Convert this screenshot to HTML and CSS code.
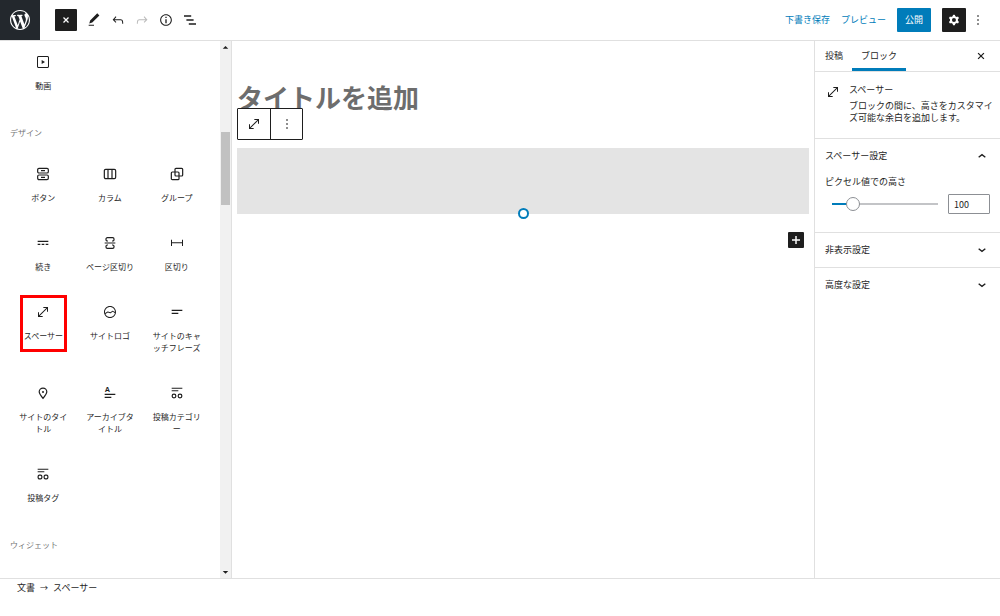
FILE: index.html
```
<!DOCTYPE html>
<html lang="ja">

<head>
    <meta charset="UTF-8">
    <meta name="viewport" content="width=device-width, initial-scale=1.0">
    <title>投稿を編集</title>
    <link rel="stylesheet" href="styles.css">
</head>

<body>
    <header class="topbar">
        <a class="logo" href="#" aria-label="WordPress">
            <svg viewBox="0 0 20 20"><path d="M20 10c0-5.51-4.49-10-10-10C4.48 0 0 4.49 0 10c0 5.52 4.48 10 10 10 5.51 0 10-4.48 10-10zM7.78 15.37L4.37 6.22c.55-.02 1.17-.08 1.17-.08.5-.06.44-1.13-.06-1.11 0 0-1.45.11-2.37.11-.18 0-.37 0-.58-.01C4.12 2.69 6.87 1.11 10 1.11c2.33 0 4.45.87 6.05 2.34-.68-.11-1.65.39-1.65 1.58 0 .74.45 1.36.9 2.1.35.61.55 1.36.55 2.46 0 1.49-1.4 5-1.4 5l-3.03-8.37c.54-.02.82-.17.82-.17.5-.05.44-1.25-.06-1.22 0 0-1.44.12-2.38.12-.87 0-2.33-.12-2.33-.12-.5-.03-.56 1.2-.06 1.22l.92.08 1.26 3.41zM17.41 10c.24-.64.74-1.87.43-4.25.7 1.29 1.05 2.71 1.05 4.25 0 3.29-1.73 6.24-4.4 7.78.97-2.59 1.94-5.2 2.92-7.78zM6.1 18.09C3.12 16.65 1.11 13.53 1.11 10c0-1.3.23-2.48.72-3.59C3.25 10.3 4.67 14.2 6.1 18.09zm4.03-6.63l2.58 6.98c-.86.29-1.76.45-2.71.45-.79 0-1.57-.11-2.29-.33.81-2.38 1.62-4.74 2.42-7.1z"/></svg>
        </a>
        <div class="tools">
            <button class="dark toggle" aria-label="閉じる"><svg class="small" viewBox="0 0 24 24"><path class="line thick" d="M6 6l12 12M18 6L6 18"/></svg></button>
            <button aria-label="編集"><svg viewBox="0 0 24 24"><path d="M20.1 5.1L16.9 2 6.2 12.7l-1.3 4.4 4.5-1.3L20.1 5.1zM4 20.8h8v-1.5H4v1.5z"/></svg></button>
            <button aria-label="元に戻す"><svg viewBox="0 0 24 24"><path d="M18.3 11.7c-.6-.6-1.4-.9-2.3-.9H6.7l2.9-3.3-1.1-1-4.5 5L8.5 16l1-1-2.7-2.7H16c.5 0 .9.2 1.3.5 1 1 1 3.4 1 4.5v.3h1.5v-.2c0-1.5 0-4.3-1.5-5.7z"/></svg></button>
            <button aria-label="やり直す" disabled><svg viewBox="0 0 24 24"><path d="M15.6 6.5l-1.1 1 2.9 3.3H8c-.9 0-1.7.3-2.3.9-1.4 1.5-1.4 4.2-1.4 5.6v.2h1.5v-.3c0-1.1 0-3.5 1-4.5.3-.3.7-.5 1.3-.5h9.2L14.5 15l1.1 1.1 4.6-4.6-4.6-5z"/></svg></button>
            <button aria-label="詳細"><svg viewBox="0 0 24 24"><path d="M12 3.2c-4.8 0-8.8 3.9-8.8 8.8 0 4.8 3.9 8.8 8.8 8.8 4.8 0 8.8-3.9 8.8-8.8 0-4.8-4-8.8-8.8-8.8zm0 16c-4 0-7.2-3.3-7.2-7.2C4.8 8 8 4.8 12 4.8s7.2 3.3 7.2 7.2c0 4-3.2 7.2-7.2 7.2zM11 17h2v-6h-2v6zm0-8h2V7h-2v2z"/></svg></button>
            <button aria-label="リスト表示"><svg viewBox="0 0 24 24"><path d="M13.8 5H3v2h10.800V5zm-3.600 12v2H21v-2H10.200zm7.200-6H6.600v2h10.800v-2z"/></svg></button>
        </div>
        <div class="actions">
            <button class="link">下書き保存</button>
            <button class="link">プレビュー</button>
            <button class="publish">公開</button>
            <button class="dark" aria-label="設定"><svg viewBox="0 0 24 24"><path fill-rule="evenodd" d="M10.289 4.836A1 1 0 0111.275 4h1.306a1 1 0 01.987.836l.244 1.466c.787.26 1.503.679 2.108 1.218l1.393-.522a1 1 0 011.216.437l.653 1.13a1 1 0 01-.23 1.273l-1.148.944a6.025 6.025 0 010 2.435l1.149.946a1 1 0 01.23 1.272l-.653 1.13a1 1 0 01-1.216.437l-1.394-.522c-.605.54-1.32.958-2.108 1.218l-.244 1.466a1 1 0 01-.987.836h-1.306a1 1 0 01-.986-.836l-.244-1.466a5.995 5.995 0 01-2.108-1.218l-1.394.522a1 1 0 01-1.217-.436l-.653-1.131a1 1 0 01.23-1.272l1.149-.946a6.026 6.026 0 010-2.435l-1.148-.944a1 1 0 01-.23-1.272l.653-1.131a1 1 0 011.217-.437l1.393.522a5.994 5.994 0 012.108-1.218l.244-1.466zM14.929 12a3 3 0 11-6 0 3 3 0 016 0z"/></svg></button>
            <button class="more" aria-label="オプション"><svg viewBox="0 0 24 24"><path d="M13 19h-2v-2h2v2zm0-6h-2v-2h2v2zm0-6h-2V5h2v2z"/></svg></button>
        </div>
    </header>

    <div class="editor">
        <aside class="inserter">
            <div class="blocks">
                <div class="grid first">
                    <button class="item"><svg viewBox="0 0 24 24"><path d="M18.7 3H5.3C4 3 3 4 3 5.3v13.4C3 20 4 21 5.3 21h13.4c1.3 0 2.3-1 2.3-2.3V5.3C21 4 20 3 18.7 3zm.8 15.7c0 .4-.4.8-.8.8H5.3c-.4 0-.8-.4-.8-.8V5.3c0-.4.4-.8.8-.8h13.4c.4 0 .8.4.8.8v13.4zM10 15l5-3-5-3v6z"/></svg>動画</button>
                </div>
                <h2>デザイン</h2>
                <div class="grid">
                    <button class="item"><svg viewBox="0 0 24 24"><rect class="line" x="4" y="3.500" width="16" height="7" rx="2"/><rect class="line" x="4" y="13.500" width="16" height="7" rx="2"/><path class="line" d="M9 7h6M9 17h6"/></svg>ボタン</button>
                    <button class="item"><svg viewBox="0 0 24 24"><rect class="line" x="3.500" y="5" width="17" height="14" rx="2"/><path class="line" d="M9 5v14M15 5v14"/></svg>カラム</button>
                    <button class="item"><svg viewBox="0 0 24 24"><rect class="line" x="9" y="3.500" width="11.500" height="11.500" rx="1.500"/><rect class="line" x="3.500" y="9" width="11.500" height="11.500" rx="1.500"/></svg>グループ</button>
                    <button class="item"><svg viewBox="0 0 24 24"><path d="M4 8.500v2h16v-2H4zm12 6.500h4v-2h-4v2zm-6 0h4v-2h-4v2zm-6 0h4v-2H4v2z"/></svg>続き</button>
                    <button class="item"><svg viewBox="0 0 24 24"><path class="line" d="M9 9H8a2 2 0 0 1-2-2V6a2 2 0 0 1 2-2h8a2 2 0 0 1 2 2v1a2 2 0 0 1-2 2h-1M4 12h16M9 15H8a2 2 0 0 0-2 2v1a2 2 0 0 0 2 2h8a2 2 0 0 0 2-2v-1a2 2 0 0 0-2-2h-1"/></svg>ページ区切り</button>
                    <button class="item"><svg viewBox="0 0 24 24"><path d="M4.500 12.500v4H3V7h1.500v3.987h15V7H21v9.500h-1.500v-4h-15z"/></svg>区切り</button>
                    <button class="item marked"><svg viewBox="0 0 24 24"><path d="M7 18h4.500v1.500h-7v-7H6V17L17 6h-4.500V4.500h7v7H18V7L7 18z"/></svg>スペーサー</button>
                    <button class="item"><svg viewBox="0 0 24 24"><path d="M12 3c-5 0-9 4-9 9s4 9 9 9 9-4 9-9-4-9-9-9zm0 1.500c4.100 0 7.500 3.400 7.500 7.500v.1c-1.400-.8-3.300-1.700-3.400-1.800-.2-.1-.5-.1-.8.1l-2.900 2.100L9 11.300c-.2-.1-.4 0-.6.1l-3.700 2.200c-.1-.5-.2-1-.2-1.500 0-4.200 3.400-7.600 7.500-7.600zm0 15c-3.100 0-5.700-1.900-6.900-4.500l3.700-2.200 3.500 1.200c.2.1.5 0 .7-.1l2.900-2.100c.8.4 2.500 1.200 3.500 1.900-.9 3.300-3.900 5.800-7.400 5.800z"/></svg>サイトロゴ</button>
                    <button class="item"><svg viewBox="0 0 24 24"><path d="M4 10.500h16V8.500H4v2zM4 15h10v-2H4v2z"/></svg>サイトのキャッチフレーズ</button>
                    <button class="item"><svg viewBox="0 0 24 24"><path class="line" d="M12 20c-1.500-1.800-5.700-6.800-5.700-9.800a5.700 5.500 0 0 1 11.400 0c0 3-4.200 8-5.700 9.800z"/><circle cx="12" cy="10.500" r="1.500"/></svg>サイトのタイトル</button>
                    <button class="item"><svg viewBox="0 0 24 24"><text class="letter" x="4" y="11">A</text><path d="M4 13h16v2H4zM4 17.500h10v2H4z"/></svg>アーカイブタイトル</button>
                    <button class="item"><svg viewBox="0 0 24 24"><path d="M4 4h16v1.500H4zM4 8h10v1.500H4z"/><circle class="line" cx="7.500" cy="16.500" r="2.800"/><circle class="line" cx="16.500" cy="16.500" r="2.800"/></svg>投稿カテゴリー</button>
                    <button class="item"><svg viewBox="0 0 24 24"><path d="M4 4h16v1.500H4zM4 8h10v1.500H4z"/><rect class="line" x="4.700" y="13.700" width="5.600" height="5.600" rx="2"/><rect class="line" x="13.700" y="13.700" width="5.600" height="5.600" rx="2"/></svg>投稿タグ</button>
                </div>
                <h2>ウィジェット</h2>
            </div>
            <div class="scrollbar">
                <svg viewBox="0 0 12 12"><path d="M3 8l3-3 3 3z"/></svg>
                <div class="thumb"></div>
                <svg viewBox="0 0 12 12"><path d="M3 5l3 3 3-3z"/></svg>
            </div>
        </aside>

        <main class="canvas">
            <h1>タイトルを追加</h1>
            <div class="spacer">
                <div class="block-tools">
                    <button aria-label="スペーサー"><svg viewBox="0 0 24 24"><path d="M7 18h4.500v1.500h-7v-7H6V17L17 6h-4.500V4.500h7v7H18V7L7 18z"/></svg></button>
                    <button aria-label="オプション"><svg viewBox="0 0 24 24"><path d="M13 19h-2v-2h2v2zm0-6h-2v-2h2v2zm0-6h-2V5h2v2z"/></svg></button>
                </div>
                <span class="handle"></span>
            </div>
            <button class="dark add" aria-label="ブロックを追加"><svg viewBox="0 0 24 24"><path class="line thick" d="M12 6v12M6 12h12"/></svg></button>
        </main>

        <aside class="settings">
            <div class="tabs">
                <button>投稿</button>
                <button class="active">ブロック</button>
                <button class="close" aria-label="設定を閉じる"><svg class="small" viewBox="0 0 24 24"><path class="line thick" d="M5 5l14 14M19 5L5 19"/></svg></button>
            </div>
            <section class="card">
                <svg viewBox="0 0 24 24"><path d="M7 18h4.500v1.500h-7v-7H6V17L17 6h-4.500V4.500h7v7H18V7L7 18z"/></svg>
                <div>
                    <h2>スペーサー</h2>
                    <p>ブロックの間に、高さをカスタマイズ可能な余白を追加します。</p>
                </div>
            </section>
            <section class="panel">
                <button class="panel-title">スペーサー設定<svg viewBox="0 0 24 24"><path class="line chevron" d="M7 14l5-4 5 4"/></svg></button>
                <div class="control">
                    <label for="height">ピクセル値での高さ</label>
                    <div class="range">
                        <input type="range" id="height" min="30" max="500" value="100">
                        <input type="text" id="heightNum" value="100" aria-label="ピクセル値での高さ">
                    </div>
                </div>
            </section>
            <section class="panel">
                <button class="panel-title">非表示設定<svg viewBox="0 0 24 24"><path class="line chevron" d="M7 10l5 4 5-4"/></svg></button>
            </section>
            <section class="panel">
                <button class="panel-title">高度な設定<svg viewBox="0 0 24 24"><path class="line chevron" d="M7 10l5 4 5-4"/></svg></button>
            </section>
        </aside>
    </div>

    <footer class="breadcrumb">
        <a href="#">文書</a><span class="arrow">→</span><span>スペーサー</span>
    </footer>
</body>

</html>
```
FILE: styles.css
```
*, *::after {
    box-sizing: border-box;
    margin: 0;
    padding: 0;
}
body {
    display: flex;
    flex-direction: column;
    height: 100vh;
    overflow: hidden;
    font-family: "Noto Sans CJK JP", sans-serif;
    font-size: 9px;
    line-height: 12px;
    color: #1e1e1e;
    background: #fff;
}
button, input {
    font: inherit;
    color: inherit;
    border: 0;
    background: none;
}
button {
    display: flex;
    align-items: center;
    justify-content: center;
}
h2 {
    font-size: 9px;
    font-weight: normal;
}
svg {
    flex: none;
    width: 16px;
    height: 16px;
    fill: currentColor;
}
.small {
    width: 10px;
    height: 10px;
}
.line {
    fill: none;
    stroke: currentColor;
    stroke-width: 1.8;
}
.chevron {
    stroke-width: 2;
}
.thick {
    stroke-width: 2.2;
}
.small .thick {
    stroke-width: 3;
}
.letter {
    font: bold 11px "Liberation Sans", sans-serif;
}
.dark {
    color: #fff;
    background: #1e1e1e;
    border-radius: 1px;
}

/* top bar */
.topbar {
    display: flex;
    align-items: center;
    height: 41px;
    border-bottom: 1px solid #e0e0e0;
}
.logo {
    display: flex;
    align-items: center;
    justify-content: center;
    width: 40px;
    height: 40px;
    color: #fff;
    background: #23282d;
}
.logo svg {
    width: 20px;
    height: 20px;
}
.tools {
    display: flex;
    flex: 1;
    margin-left: 15px;
}
.tools button {
    width: 24px;
    height: 22px;
}
.tools .toggle {
    width: 22px;
    margin-right: 5px;
}
.tools button:disabled {
    color: #bbb;
}
.actions {
    display: flex;
    align-items: center;
    gap: 11px;
    padding-right: 10px;
}
.actions .link {
    color: #007cba;
}
.actions .publish {
    height: 24px;
    padding: 0 8px;
    color: #fff;
    background: #007cba;
    border-radius: 1px;
}
.actions .dark, .actions .more {
    width: 24px;
    height: 24px;
}
.actions .more {
    margin-left: -11px;
}

.editor {
    display: flex;
    flex: 1;
    min-height: 0;
}

/* block list */
.inserter {
    display: flex;
    width: 232px;
    border-right: 1px solid #e0e0e0;
}
.blocks {
    flex: 1;
    padding: 0 10px;
    overflow: hidden;
    font-size: 8px;
}
.blocks h2 {
    margin: 19px 0 12px;
    font-size: 8px;
    color: #757575;
}
.grid {
    display: grid;
    grid-template-columns: repeat(3, 1fr);
}
.item {
    position: relative;
    flex-direction: column;
    justify-content: flex-start;
    padding: 15px 9px 16px;
    text-align: center;
}
.first .item {
    padding-top: 13px;
}
.item svg {
    margin-bottom: 10px;
}
.marked::after {
    content: "";
    position: absolute;
    top: 6px;
    left: 10px;
    right: 10px;
    height: 57px;
    border: 3px solid #f00;
}
.scrollbar {
    display: flex;
    flex-direction: column;
    width: 11px;
    background: #f1f1f1;
}
.scrollbar svg {
    width: 11px;
    height: 12px;
}
.scrollbar .thumb {
    height: 73px;
    margin: 79px 1px auto;
    background: #c1c1c1;
}

/* canvas */
.canvas {
    flex: 1;
    padding: 35px 5px 0;
}
.canvas h1 {
    height: 72px;
    font-size: 26px;
    line-height: 42px;
    color: #6d6d6d;
}
.spacer {
    position: relative;
    height: 66px;
    background: #e4e4e4;
}
.block-tools {
    position: absolute;
    top: -40px;
    left: 0;
    display: flex;
    border: 1px solid #1e1e1e;
    border-radius: 1px;
    background: #fff;
}
.block-tools button {
    width: 32px;
    height: 30px;
}
.block-tools button + button {
    border-left: 1px solid #1e1e1e;
}
.handle {
    position: absolute;
    bottom: -5px;
    left: 50%;
    width: 11px;
    height: 11px;
    margin-left: -5px;
    border: 2px solid #007cba;
    border-radius: 50%;
    background: #fff;
}
.add {
    width: 16px;
    height: 16px;
    margin: 18px 5px 0 auto;
}

/* settings */
.settings {
    width: 186px;
    border-left: 1px solid #e0e0e0;
}
.tabs {
    display: flex;
    height: 31px;
    border-bottom: 1px solid #e0e0e0;
}
.tabs button {
    padding: 0 9px;
}
.tabs button:first-child {
    padding-left: 10px;
}
.tabs .active {
    border-bottom: 3px solid #007cba;
    padding-top: 3px;
}
.tabs .close {
    margin-left: auto;
    padding-right: 14px;
}
.card {
    display: flex;
    gap: 8px;
    padding: 12px 6px 14px 10px;
}
.card h2 {
    margin-bottom: 4px;
}
.panel {
    border-top: 1px solid #e0e0e0;
}
.panel-title {
    justify-content: space-between;
    width: 100%;
    height: 34px;
    padding: 0 10px;
}
.control {
    padding: 3px 10px 18px;
}
.range {
    display: flex;
    align-items: center;
    gap: 10px;
    margin-top: 6px;
    padding-left: 7px;
}
.range input[type="range"] {
    flex: 1;
    min-width: 0;
    height: 14px;
    appearance: none;
}
.range input::-webkit-slider-runnable-track {
    height: 2px;
    background: linear-gradient(to right, #007cba 18%, #c3c4c7 18%);
}
.range input::-webkit-slider-thumb {
    appearance: none;
    width: 14px;
    height: 14px;
    margin-top: -6px;
    border: 1px solid #8c8f94;
    border-radius: 50%;
    background: #fff;
}
.range input[type="text"] {
    width: 42px;
    height: 20px;
    padding: 0 5px;
    border: 1px solid #8c8f94;
    border-radius: 1px;
}

/* breadcrumb */
.breadcrumb {
    display: flex;
    gap: 5px;
    height: 38px;
    padding: 3px 17px;
    border-top: 1px solid #e0e0e0;
}
.breadcrumb a {
    color: inherit;
    text-decoration: none;
}
.arrow {
    font-size: 8px;
}
```
